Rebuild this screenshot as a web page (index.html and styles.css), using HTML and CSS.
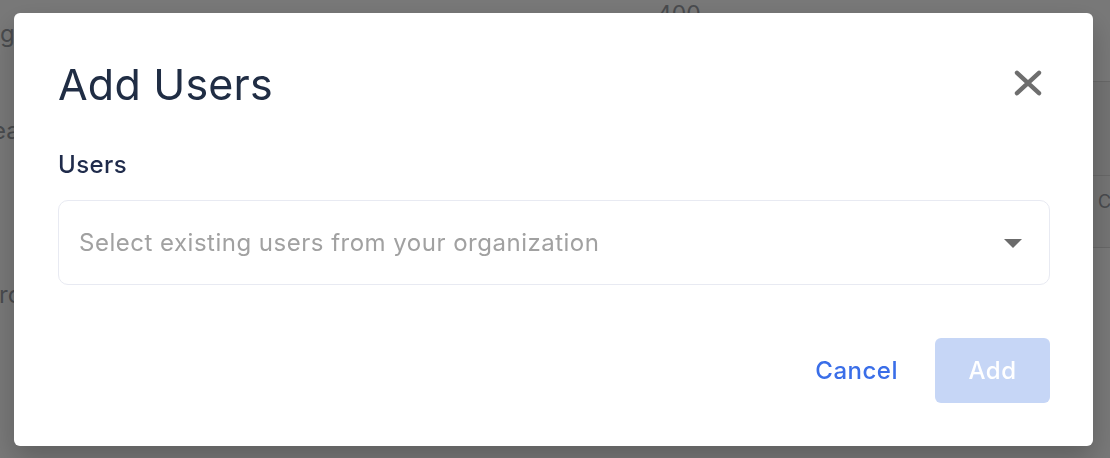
FILE: index.html
```html
<!DOCTYPE html>
<html lang="en">
<head>
<meta charset="utf-8">
<title>Add Users</title>
<link rel="stylesheet" href="styles.css">
</head>
<body>
<div class="page">
  <aside class="page-left">
    <p class="bg-text left-1">gs</p>
    <p class="bg-text left-2">eas</p>
    <p class="bg-text left-3">rces</p>
  </aside>
  <main class="page-center">
    <div class="stat">400</div>
  </main>
  <aside class="page-right">
    <div class="row row-a"></div>
    <div class="row row-b"></div>
    <div class="row row-c"><span class="bg-text bg-small">Cost</span></div>
  </aside>
</div>

<div class="overlay">
  <section class="modal" role="dialog" aria-labelledby="modal-title">
    <header class="modal-header">
      <h1 class="modal-title" id="modal-title">Add Users</h1>
      <button class="close-btn" type="button" aria-label="Close">
        <svg width="28" height="26" viewBox="0 0 28 26" aria-hidden="true">
          <path d="M3 2.8 L25 23.2 M25 2.8 L3 23.2" stroke="currentColor" stroke-width="4.4" stroke-linecap="round" fill="none"/>
        </svg>
      </button>
    </header>

    <div class="field">
      <label class="field-label">Users</label>
      <div class="select">
        <span class="select-placeholder">Select existing users from your organization</span>
        <svg class="select-caret" width="18" height="9" viewBox="0 0 18 9" aria-hidden="true">
          <polygon points="0,0 18,0 9,9" fill="currentColor"/>
        </svg>
      </div>
    </div>

    <footer class="modal-footer">
      <button class="btn-text" type="button">Cancel</button>
      <button class="btn-primary" type="button" disabled>Add</button>
    </footer>
  </section>
</div>
</body>
</html>
```

FILE: styles.css
```css
* {
  box-sizing: border-box;
}

html, body {
  margin: 0;
  padding: 0;
}

body {
  width: 1110px;
  height: 458px;
  overflow: hidden;
  background: #ffffff;
  font-family: Inter, "Noto Sans", "Liberation Sans", sans-serif;
}

/* ---------- page behind the dialog ---------- */
.page {
  display: flex;
  height: 458px;
}

.page-left {
  width: 60px;
  overflow: hidden;
  display: flex;
  flex-direction: column;
  align-items: flex-start;
}

.bg-text {
  margin: 0;
  font-size: 24px;
  line-height: 30px;
  color: #9b9fa6;
  white-space: nowrap;
}

.left-1 { margin-top: 19px; margin-left: 0; }
.left-2 { margin-top: 67px; margin-left: -8px; }
.left-3 { margin-top: 134px; margin-left: -1px; }

.page-center {
  flex: 1;
  display: flex;
  justify-content: flex-start;
  padding-left: 597px;
}

.stat {
  margin-top: -1px;
  font-size: 23px;
  line-height: 30px;
  color: #9b9fa6;
}

.page-right {
  width: 120px;
  display: flex;
  flex-direction: column;
}

.row {
  border-bottom: 1px solid #dcdcdc;
}

.row-a { height: 82px; }
.row-b { height: 94px; background: #f4f4f4; }
.row-c {
  height: 72px;
  padding: 14px 0 0 108px;
  background: #f6f6f6;
  overflow: hidden;
}

.bg-small {
  font-size: 18px;
  line-height: 24px;
}

/* ---------- overlay + dialog ---------- */
.overlay {
  position: fixed;
  inset: 0;
  background: rgba(0, 0, 0, 0.53);
  padding: 13px 0 0 14px;
}

.modal {
  width: 1079px;
  background: #ffffff;
  border-radius: 6px;
  padding: 45px 43px 43px 44px;
  box-shadow: 0 12px 28px rgba(0, 0, 0, 0.22);
  display: flex;
  flex-direction: column;
}

.modal-header {
  display: flex;
  align-items: center;
  justify-content: space-between;
  height: 52px;
}

.modal-title {
  margin: 0;
  font-size: 43px;
  line-height: 52px;
  font-weight: 400;
  color: #202d44;
  letter-spacing: 0.2px;
}

.close-btn {
  display: flex;
  align-items: center;
  justify-content: center;
  width: 38px;
  height: 38px;
  margin-right: 3px;
  margin-top: -2px;
  padding: 0;
  border: 0;
  background: transparent;
  color: #6e6e6e;
  cursor: pointer;
}

.field {
  display: flex;
  flex-direction: column;
  margin-top: 39px;
}

.field-label {
  font-size: 24px;
  line-height: 32px;
  font-weight: 500;
  color: #1f2b4b;
  letter-spacing: 0.4px;
  margin-bottom: 19px;
}

.select {
  display: flex;
  align-items: center;
  justify-content: space-between;
  height: 85px;
  padding: 0 27px 0 20px;
  border: 1px solid #e8eaf2;
  border-radius: 10px;
}

.select-placeholder {
  font-size: 24px;
  line-height: 30px;
  color: #a1a1a1;
  letter-spacing: 0.5px;
  margin-top: 1px;
}

.select-caret {
  color: #6b6b6b;
  margin-top: 1px;
}

.modal-footer {
  display: flex;
  justify-content: flex-end;
  align-items: center;
  gap: 17px;
  margin-top: 53px;
}

.btn-text {
  height: 65px;
  padding: 0 20px;
  border: 0;
  background: transparent;
  font-family: inherit;
  font-size: 24px;
  font-weight: 500;
  letter-spacing: 0.5px;
  color: #3a6ee8;
  cursor: pointer;
}

.btn-primary {
  width: 115px;
  height: 65px;
  border: 0;
  border-radius: 6px;
  background: #c6d6f6;
  font-family: inherit;
  font-size: 24px;
  font-weight: 500;
  letter-spacing: 0.5px;
  color: #ffffff;
}
```
